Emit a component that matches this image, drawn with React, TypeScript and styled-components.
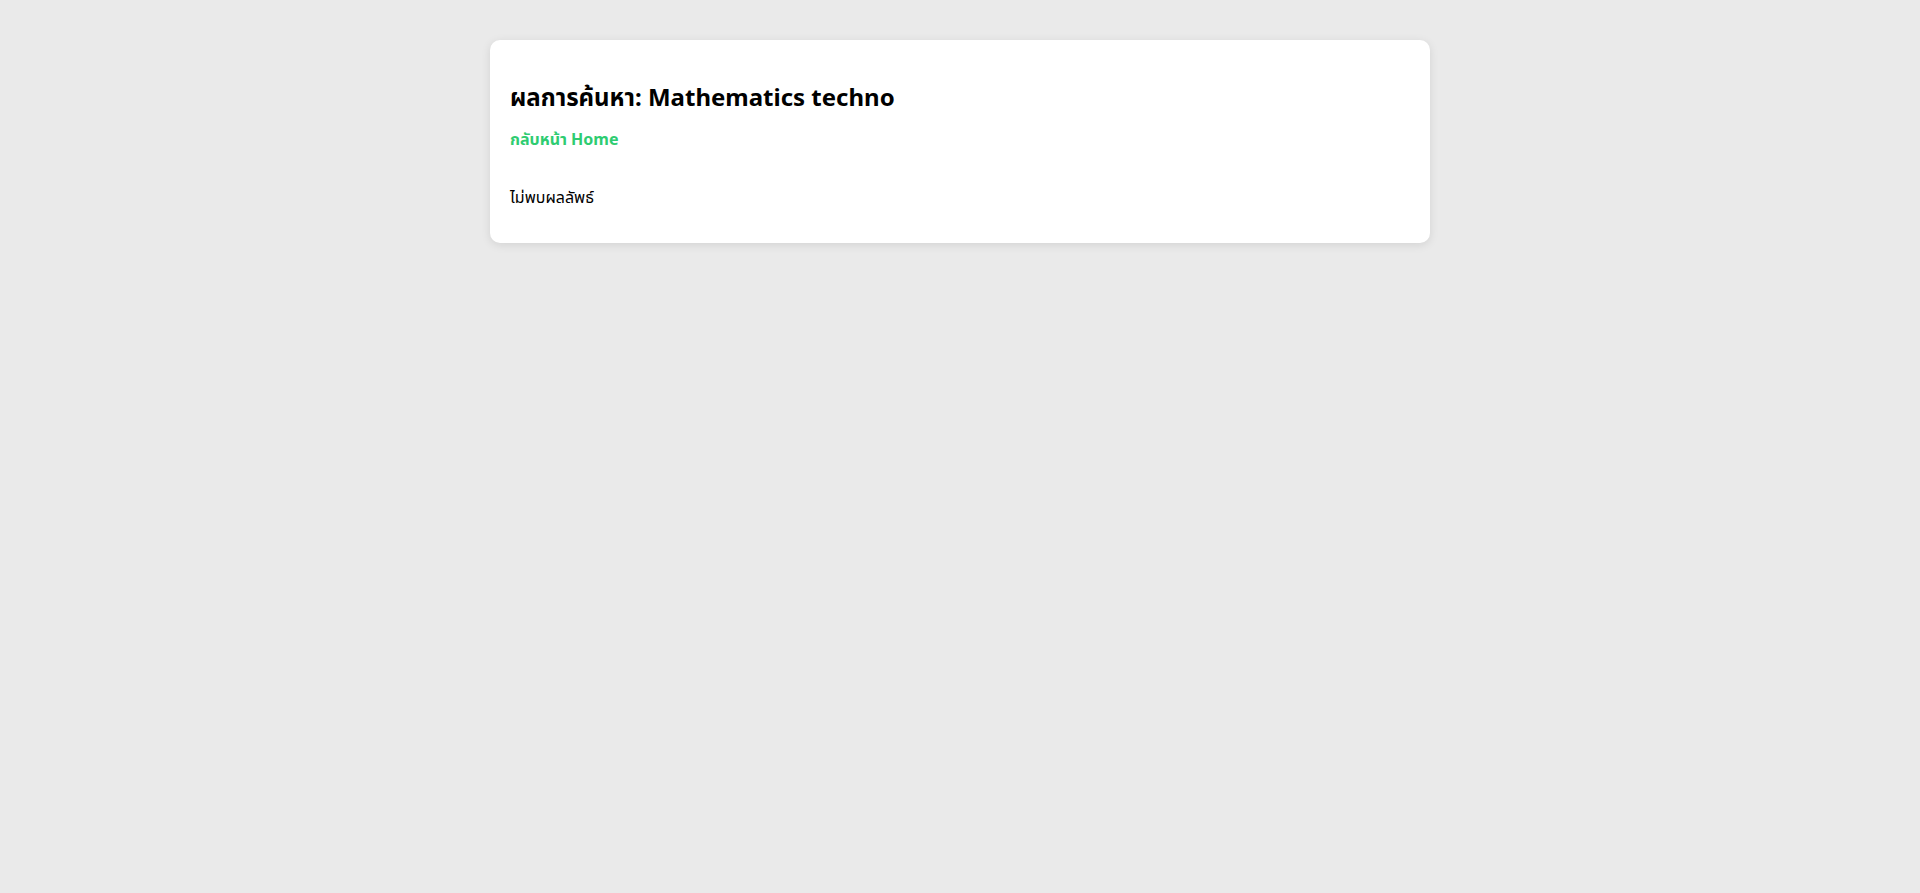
import React from "react";
import styled, { createGlobalStyle } from "styled-components";

const Global = createGlobalStyle`
  html, body { margin: 0; padding: 0; }
  body {
    background: #eaeaea;
    font-family: "Segoe UI", "Noto Sans", "Noto Sans Thai", "Open Sans", sans-serif;
    color: #000;
  }
`;

const Card = styled.div`
  max-width: 900px;
  margin: 40px auto;
  padding: 20px;
  background: #fff;
  border-radius: 10px;
  box-shadow: 0 2px 10px rgba(0, 0, 0, 0.1);
`;

const Title = styled.h2`
  font-size: 24px;
  font-weight: 700;
  margin: 21px 0 15px;
  line-height: 32px;
`;

const BackLink = styled.a`
  display: inline-block;
  color: #2ecc71;
  font-weight: 700;
  font-size: 16px;
  text-decoration: none;
  margin-bottom: 18px;
`;

const Empty = styled.p`
  font-size: 16px;
  margin: 16px 0 13px;
`;

export default function App() {
  return (
    <>
      <Global />
      <Card>
        <Title>ผลการค้นหา: Mathematics techno</Title>
        <BackLink href="#">กลับหน้า Home</BackLink>
        <Empty>ไม่พบผลลัพธ์</Empty>
      </Card>
    </>
  );
}
